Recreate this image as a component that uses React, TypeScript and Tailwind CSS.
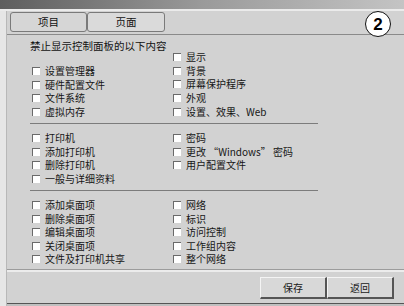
import React from 'react';

type Item = { label: string };

const cjk = '"Noto Sans CJK SC", "Liberation Sans", sans-serif';

function Check({ label }: Item) {
  return (
    <div className="flex h-[13.6px] items-center">
      <span className="mr-[5px] h-[8px] w-[8px] shrink-0 border-t border-l border-t-[#6a6a6a] border-l-[#6a6a6a] bg-white" />
      <span className="whitespace-nowrap text-[10px] leading-none text-[#161616]">{label}</span>
    </div>
  );
}

function Rule() {
  return <div className="ml-[-2px] h-px w-[288px] bg-[#7c7c7c]" />;
}

function RaisedButton({ children }: { children: React.ReactNode }) {
  return (
    <button className="flex h-[22px] w-[67px] items-center justify-center border-t border-l border-b-2 border-r-2 border-t-[#f4f4f4] border-l-[#f4f4f4] border-b-[#555] border-r-[#555] bg-[#d8d8d8] text-[10px] text-[#1a1a1a]">
      {children}
    </button>
  );
}

export default function App() {
  const s1Left = ['设置管理器', '硬件配置文件', '文件系统', '虚拟内存'];
  const s1Right = ['显示', '背景', '屏幕保护程序', '外观', '设置、效果、Web'];
  const s2Left = ['打印机', '添加打印机', '删除打印机', '一般与详细资料'];
  const s2Right = ['密码', '更改 “Windows” 密码', '用户配置文件'];
  const s3Left = ['添加桌面项', '删除桌面项', '编辑桌面项', '关闭桌面项', '文件及打印机共享'];
  const s3Right = ['网络', '标识', '访问控制', '工作组内容', '整个网络'];

  return (
    <div className="flex h-[306px] w-[404px] flex-col overflow-hidden bg-[#d2d2d2]" style={{ fontFamily: cjk }}>
      {/* top swoosh */}
      <div className="h-[9px] bg-gradient-to-r from-[#5e5e5e] via-[#9a9a9a] to-[#c4c4c4]" />
      <div className="h-[2px] bg-[#ebebeb]" />

      <div className="flex flex-1">
        <div className="w-[6px] bg-[#e6e6e6]" />
        <div className="flex flex-1 flex-col border-l border-[#b8b8b8]">
          {/* tab bar */}
          <div className="flex h-[24px] items-start border-b border-[#8a8a8a] pl-[3px] pt-px">
            <div className="flex h-[20px] w-[77px] items-center justify-center rounded-[3px] border border-[#7a7a7a] bg-[#d6d6d6] text-[10.5px] text-[#111]">
              项目
            </div>
            <div className="flex h-[20px] w-[78px] items-center justify-center rounded-[3px] border border-[#7a7a7a] bg-[#dadada] text-[10.5px] text-[#111]">
              页面
            </div>
            <div className="ml-auto mr-[13px] mt-[-1px] flex h-[26px] w-[26px] items-center justify-center rounded-full border border-[#111] bg-white text-[17px] font-bold leading-none text-black" style={{ fontFamily: '"Liberation Sans", sans-serif' }}>
              2
            </div>
          </div>

          {/* content */}
          <div className="flex flex-col pl-[25px] pt-[4px]">
            <div className="flex">
              <div className="w-[141px]">
                <div className="ml-[-2px] h-[25.3px] text-[10.5px] leading-[14px] text-[#111]">禁止显示控制面板的以下内容</div>
                {s1Left.map((l) => <Check key={l} label={l} />)}
              </div>
              <div className="pt-[11.5px]">
                {s1Right.map((l) => <Check key={l} label={l} />)}
              </div>
            </div>
            <div className="mt-[4.5px]"><Rule /></div>

            <div className="mt-[7px] flex">
              <div className="w-[141px]">
                {s2Left.map((l) => <Check key={l} label={l} />)}
              </div>
              <div>
                {s2Right.map((l) => <Check key={l} label={l} />)}
              </div>
            </div>
            <div className="mt-[4.9px]"><Rule /></div>

            <div className="mt-[6.7px] flex">
              <div className="w-[141px]">
                {s3Left.map((l) => <Check key={l} label={l} />)}
              </div>
              <div>
                {s3Right.map((l) => <Check key={l} label={l} />)}
              </div>
            </div>
          </div>

          {/* footer */}
          <div className="mt-auto">
            <div className="h-px bg-[#9c9c9c]" />
            <div className="h-[2px] bg-[#ececec]" />
            <div className="flex h-[31px] items-start justify-end pr-[10px] pt-[5px]">
              <RaisedButton>保存</RaisedButton>
              <RaisedButton>返回</RaisedButton>
            </div>
            <div className="h-px bg-[#555]" />
            <div className="h-[2px] bg-[#c0c0c0]" />
          </div>
        </div>
      </div>
    </div>
  );
}
